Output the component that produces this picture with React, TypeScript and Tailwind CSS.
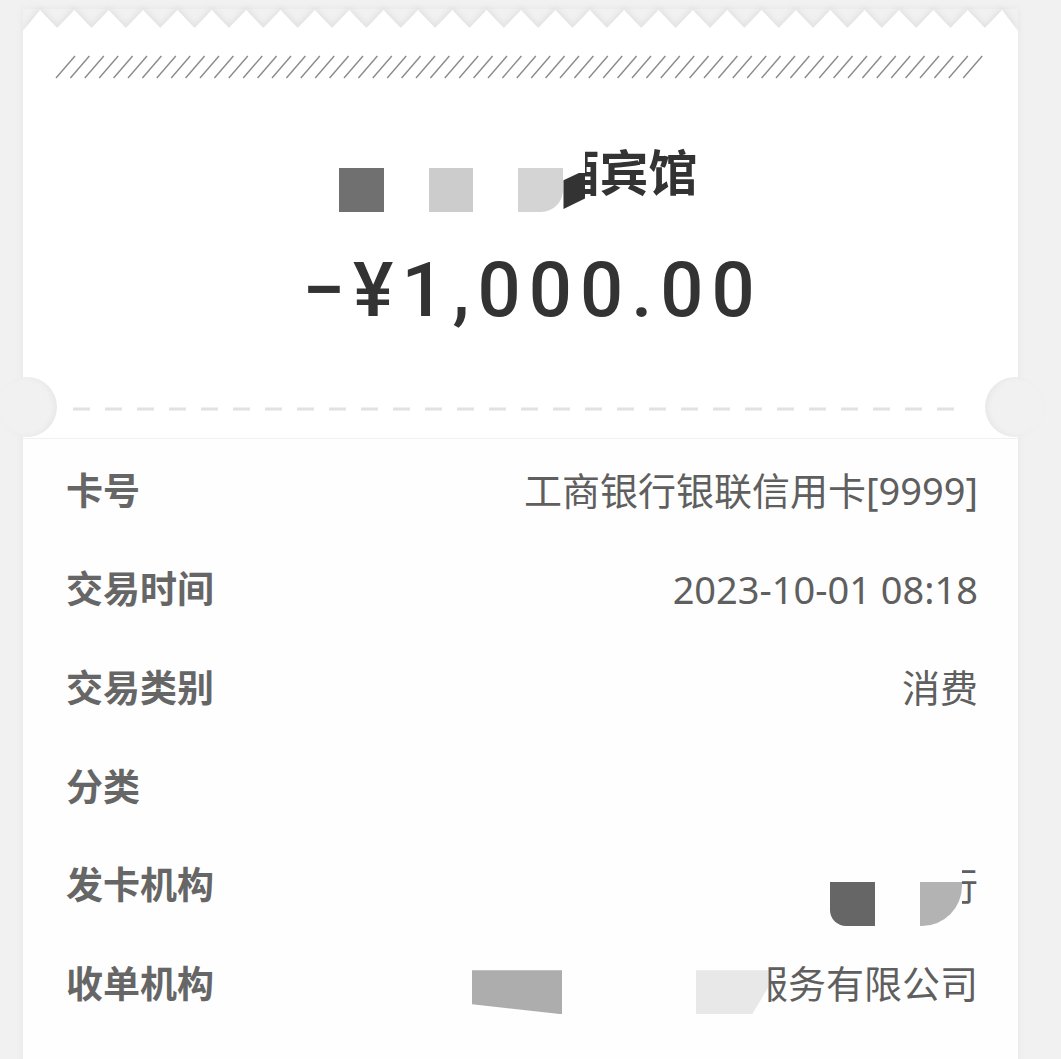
import React from "react";

const rows = [
  { label: "卡号", value: "工商银行银联信用卡[9999]" },
  { label: "交易时间", value: "2023-10-01 08:18" },
  { label: "交易类别", value: "消费" },
  { label: "分类", value: "" },
  { label: "发卡机构", value: "issuer" },
  { label: "收单机构", value: "acquirer" },
];

const font = "font-['Noto_Sans','Noto_Sans_CJK_SC',sans-serif]";

function Zigzag() {
  const pts: string[] = ["0,22"];
  for (let k = 0; k < 29; k++) {
    const px = 17 + k * 34.36;
    pts.push(`${px},1`);
    if (k < 28) pts.push(`${px + 17.18},19`);
  }
  pts.push("995,22");
  return (
    <svg width="995" height="22" className="block" style={{ filter: "drop-shadow(0 -2px 3px rgba(0,0,0,0.08))" }}>
      <polygon points={pts.join(" ")} fill="#ffffff" />
    </svg>
  );
}

function Hatch() {
  const lines = Array.from({ length: 64 }, (_, i) => 33 + i * 14.4);
  return (
    <svg width="995" height="24" className="block">
      {lines.map((x) => (
        <line key={x} x1={x} y1={23} x2={x + 19} y2={1} stroke="#8a8a8a" strokeWidth="1.4" />
      ))}
    </svg>
  );
}

function Clipped({ ch, w }: { ch: string; w: number }) {
  return (
    <span className="inline-flex justify-end overflow-hidden" style={{ width: w }}>
      <span className="shrink-0">{ch}</span>
    </span>
  );
}

function Value({ kind, value }: { kind: string; value: string }) {
  if (kind === "issuer") {
    return (
      <div className="flex items-start h-[44px] mt-[38px]">
        <div className="w-[45px] h-[44px] bg-[#666666] rounded-bl-[16px]" />
        <div className="w-[45px]" />
        <div className="w-[42px] h-[44px] bg-[#b3b3b3] rounded-br-[40px]" />
        <div className="-mt-[16px] text-[#5f5f5f] text-[38px] leading-none">
          <Clipped ch="行" w={16} />
        </div>
      </div>
    );
  }
  if (kind === "acquirer") {
    return (
      <div className="flex items-center">
        <div className="mt-[18px] w-[90px] h-[44px] bg-[#adadad] [clip-path:polygon(0_0,100%_0,100%_100%,0_77%)]" />
        <div className="w-[134px]" />
        <div className="mt-[18px] w-[72px] h-[44px] bg-[#e8e8e8] [clip-path:polygon(0_0,100%_0,100%_40%,78%_100%,0_100%)]" />
        <span className="text-[38px] text-[#5f5f5f] leading-none">
          <Clipped ch="服" w={20} />
          务有限公司
        </span>
      </div>
    );
  }
  return <span className="text-[38px] text-[#5f5f5f] leading-none">{value}</span>;
}

export default function App() {
  return (
    <div className={`w-[1061px] h-[1059px] overflow-hidden bg-[#f1f1f1] pt-[9px] pl-[23px] ${font}`}>
      <div className="relative w-[995px] shadow-[0_0_8px_rgba(0,0,0,0.05)]">
        <Zigzag />
        <div className="bg-white h-[407px] relative">
          <div className="pt-[24px]">
            <Hatch />
          </div>
          <div className="mt-[67px] h-[70px] flex justify-center">
            <div className="flex items-start ml-[-4px]">
              <div className="mt-[22px] w-[45px] h-[44px] bg-[#707070]" />
              <div className="w-[45px]" />
              <div className="mt-[22px] w-[44px] h-[44px] bg-[#cccccc]" />
              <div className="w-[45px]" />
              <div className="mt-[22px] w-[45px] h-[44px] bg-[#d4d4d4] rounded-br-[22px]" />
              <div className="mt-[27px] w-[22px] h-[36px] bg-[#333333] [clip-path:polygon(0_20%,70%_0,100%_0,100%_70%,0_100%)]" />
              <div className="text-[49px] font-bold text-[#333333] leading-none pt-[2px] flex">
                <Clipped ch="酒" w={14} />
                <span>宾馆</span>
              </div>
            </div>
          </div>
          <div className="mt-[36px] flex justify-center">
            <div className="font-['Roboto','Noto_Sans',sans-serif] font-medium text-[76px] leading-none tracking-[8px] text-[#333333] ml-[24px]">
              −¥1,000.00
            </div>
          </div>
          <div className="absolute left-0 top-[376px] w-[995px] flex items-center">
            <svg width="995" height="4" className="block">
              <line x1="50" y1="2" x2="946" y2="2" stroke="#e2e2e2" strokeWidth="3" strokeDasharray="17 15" />
            </svg>
          </div>
          <div className="absolute left-[-26px] top-[346px] w-[60px] h-[60px] rounded-full bg-[#f1f1f1] shadow-[inset_-3px_0_6px_rgba(0,0,0,0.04)]" />
          <div className="absolute left-[962px] top-[346px] w-[60px] h-[60px] rounded-full bg-[#f1f1f1] shadow-[inset_3px_0_6px_rgba(0,0,0,0.04)]" />
        </div>
        <div className="bg-[#fefefe] border-t border-[#f1f1f1] pt-[2px] pb-[40px] pl-[43px] pr-[40px]">
          {rows.map((r) => (
            <div key={r.label} className="h-[98.6px] flex items-center justify-between">
              <span className="text-[37px] font-bold text-[#666666] leading-none">{r.label}</span>
              <Value kind={r.value === "issuer" || r.value === "acquirer" ? r.value : "text"} value={r.value} />
            </div>
          ))}
        </div>
      </div>
    </div>
  );
}
